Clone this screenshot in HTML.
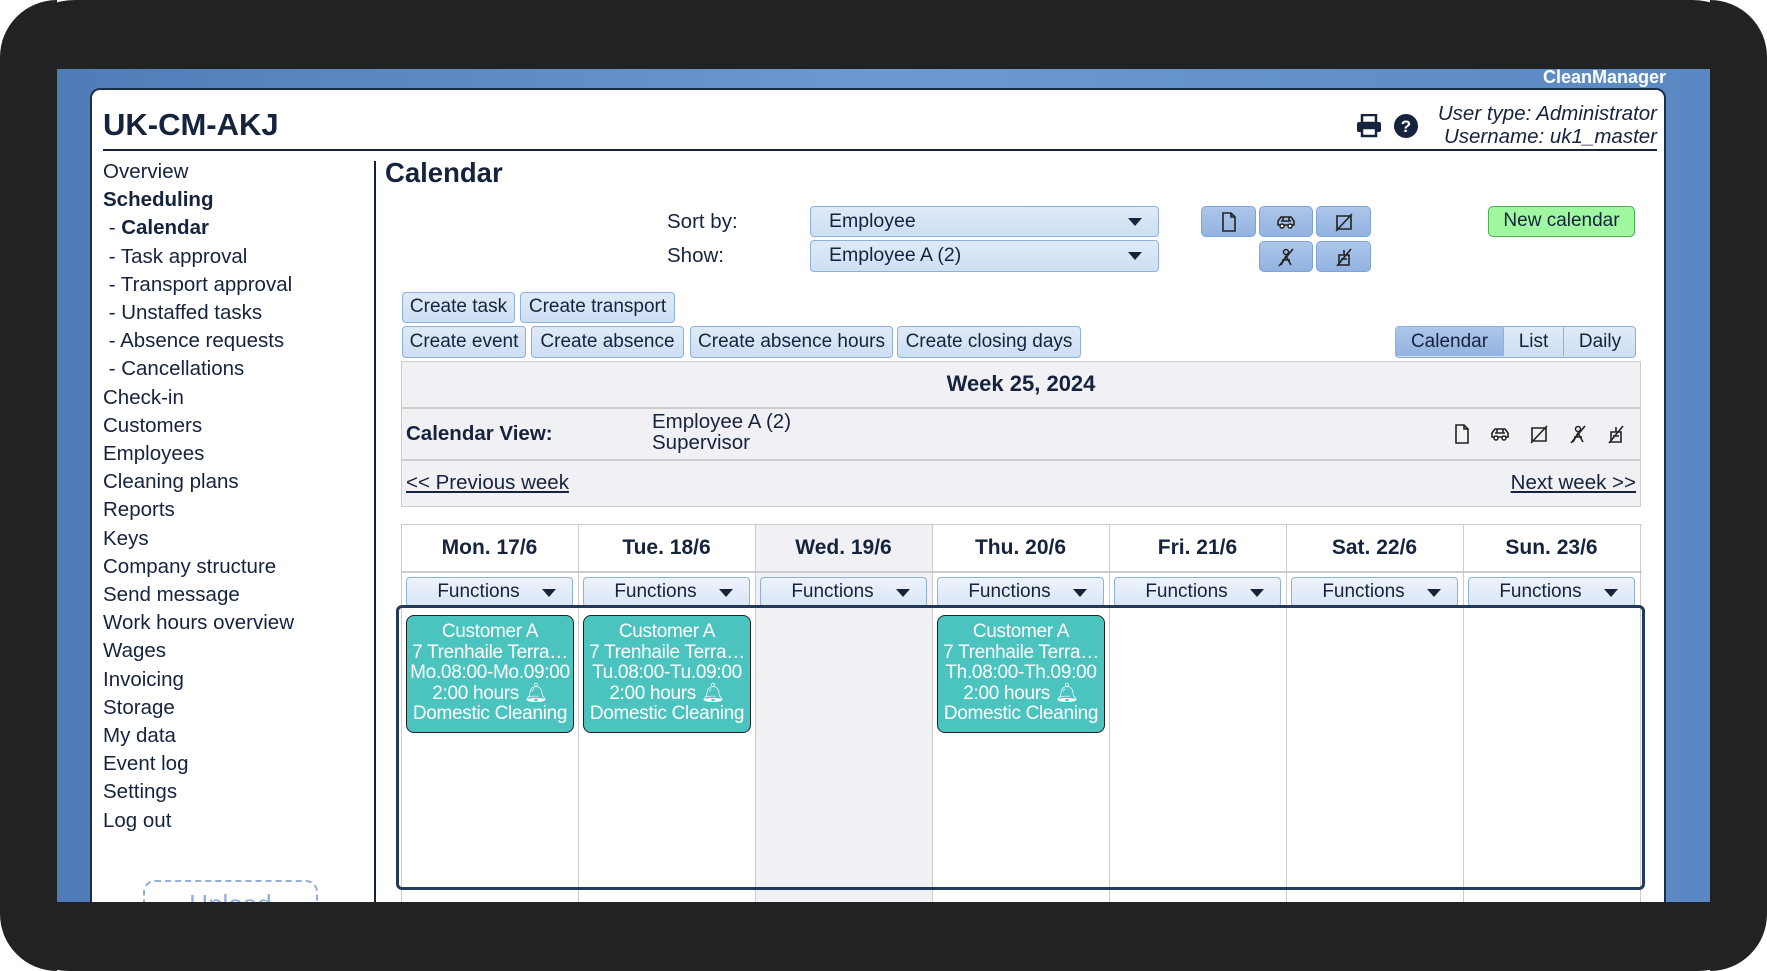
<!DOCTYPE html>
<html><head><meta charset="utf-8">
<style>
*{margin:0;padding:0;box-sizing:border-box}
html,body{width:1767px;height:971px;overflow:hidden}
body{background:#fff;font-family:"Liberation Sans",Arial,sans-serif;color:#16233d;position:relative}
#frame{position:absolute;left:0;top:0;width:1767px;height:971px;background:#222;border-radius:75px}
#blue{position:absolute;left:57px;top:69px;width:1653px;height:833px;background:linear-gradient(90deg,#4f7cb8,#6a9ad0 50%,#5a88c3);overflow:hidden}
#panel{position:absolute;left:33px;top:19px;width:1576px;height:840px;background:#fff;border:2px solid #1c2d48;border-radius:10px 10px 0 0}
.a{position:absolute;white-space:nowrap}
.nav{font-size:20.5px;line-height:28.2px}
.btn{position:absolute;background:linear-gradient(#dfeaf7,#cddff3);border:1.5px solid #8fb0dd;border-radius:4px;font-size:19px;text-align:center;color:#16233d}
.ib{position:absolute;background:linear-gradient(#adc6ea,#93b3e1);border:1.5px solid #7ea3d8;border-radius:5px;display:flex;align-items:center;justify-content:center}
.task{position:absolute;background:#4bc4c0;border:1.5px solid #222;border-radius:8px;color:#fff;font-size:19px;letter-spacing:-0.3px;line-height:20.5px;text-align:center;overflow:hidden;white-space:nowrap;padding-top:6px}
.col{position:absolute;top:0;height:500px;border-left:1.5px solid #ccc}
.dh{position:absolute;font-weight:bold;font-size:21px;text-align:center;width:177px;top:11px}
.fn{position:absolute;top:52px;width:167px;height:30px;background:linear-gradient(#eef3fb,#d9e6f6);border:1.5px solid #8fb0dd;border-radius:4px;font-size:19px;line-height:27px;text-indent:-22px;text-align:center}
.fn:after{content:"";position:absolute;right:16px;top:11px;border-left:7px solid transparent;border-right:7px solid transparent;border-top:8px solid #16233d}
</style></head><body>
<svg width="0" height="0" style="position:absolute">
 <defs>
  <g id="doc"><path d="M4 1h8l4 4v14H4z M12 1v4h4" fill="none" stroke="#222" stroke-width="1.6"/></g>
  <g id="car"><path d="M2 13v-4l3-4h10l3 4v4z M5 9h10 M7 5v4 M13 5v4" fill="none" stroke="#222" stroke-width="1.6"/><circle cx="6" cy="14" r="2" fill="#fff" stroke="#222" stroke-width="1.5"/><circle cx="14" cy="14" r="2" fill="#fff" stroke="#222" stroke-width="1.5"/></g>
  <g id="nosq"><path d="M3 4h14v13H3z M2 19L18 2" fill="none" stroke="#222" stroke-width="1.6"/></g>
  <g id="nop"><circle cx="10" cy="5" r="2.5" fill="none" stroke="#222" stroke-width="1.5"/><path d="M5 18l5-9 5 9 M6 13h8 M3 19L17 2" fill="none" stroke="#222" stroke-width="1.6"/></g>
  <g id="nop2"><path d="M5 8h10v10H5z M10 3v5 M7 12h6 M3 19L17 2" fill="none" stroke="#222" stroke-width="1.6"/></g>
 </defs>
</svg>
<div id="frame"></div>
<div id="blue">
 <div class="a" style="right:44px;top:-2px;color:#fff;font-weight:bold;font-size:18px">CleanManager</div>
 <div id="panel"></div>
</div>
<div class="a" style="left:103px;top:107px;font-size:31px;font-weight:bold">UK-CM-AKJ</div>
<div class="a" style="left:103px;top:149px;width:1554px;height:2px;background:#16233d"></div>
<svg class="a" style="left:1356px;top:114px" width="26" height="24" viewBox="0 0 26 24"><rect x="6" y="1" width="14" height="8" fill="none" stroke="#16233d" stroke-width="2.5"/><rect x="1" y="8" width="24" height="10" rx="2" fill="#16233d"/><rect x="6" y="14" width="14" height="8" fill="#fff" stroke="#16233d" stroke-width="2.5"/></svg>
<svg class="a" style="left:1394px;top:114px" width="24" height="24" viewBox="0 0 24 24"><circle cx="12" cy="12" r="12" fill="#16233d"/><text x="12" y="18" font-family="Liberation Sans" font-weight="bold" font-size="17" fill="#fff" text-anchor="middle">?</text></svg>
<div class="a" style="right:110px;top:102px;font-size:20.5px;font-style:italic;text-align:right;line-height:23px">User type: Administrator<br>Username: uk1_master</div>
<div class="a nav" style="left:103px;top:158px">Overview<br><b>Scheduling</b><br>&nbsp;- <b>Calendar</b><br>&nbsp;- Task approval<br>&nbsp;- Transport approval<br>&nbsp;- Unstaffed tasks<br>&nbsp;- Absence requests<br>&nbsp;- Cancellations<br>Check-in<br>Customers<br>Employees<br>Cleaning plans<br>Reports<br>Keys<br>Company structure<br>Send message<br>Work hours overview<br>Wages<br>Invoicing<br>Storage<br>My data<br>Event log<br>Settings<br>Log out</div>
<div class="a" style="left:143px;top:880px;width:175px;height:40px;border:2px dashed #8fb0dd;border-radius:12px;color:#8fb0dd;font-size:26px;text-align:center;padding-top:7px">Upload</div>
<div class="a" style="left:374px;top:161px;width:2px;height:745px;background:#16233d"></div>
<div class="a" style="left:385px;top:157px;font-size:27.5px;font-weight:bold">Calendar</div>
<div class="a" style="left:667px;top:210px;font-size:20.5px">Sort by:</div>
<div class="a" style="left:667px;top:244px;font-size:20.5px">Show:</div>
<div class="btn" style="left:810px;top:206px;width:349px;height:31px;text-align:left;padding:3px 18px;font-size:19.5px">Employee<span style="position:absolute;right:16px;top:11px;border-left:7px solid transparent;border-right:7px solid transparent;border-top:8px solid #16233d"></span></div>
<div class="btn" style="left:810px;top:240px;width:349px;height:32px;text-align:left;padding:3px 18px;font-size:19.5px">Employee A (2)<span style="position:absolute;right:16px;top:11px;border-left:7px solid transparent;border-right:7px solid transparent;border-top:8px solid #16233d"></span></div>
<div class="ib" style="left:1201px;top:206px;width:55px;height:31px"><svg width="20" height="20"><use href="#doc"/></svg></div>
<div class="ib" style="left:1259px;top:206px;width:54px;height:31px"><svg width="20" height="20"><use href="#car"/></svg></div>
<div class="ib" style="left:1316px;top:206px;width:55px;height:31px"><svg width="20" height="20"><use href="#nosq"/></svg></div>
<div class="ib" style="left:1259px;top:241px;width:54px;height:31px"><svg width="20" height="20"><use href="#nop"/></svg></div>
<div class="ib" style="left:1316px;top:241px;width:55px;height:31px"><svg width="20" height="20"><use href="#nop2"/></svg></div>
<div class="a" style="left:1488px;top:206px;width:147px;height:31px;background:#9ff79f;border:1.5px solid #4caf50;border-radius:5px;font-size:19px;text-align:center;line-height:28px">New calendar</div>
<div class="btn" style="left:402px;top:292px;width:113px;height:31px;line-height:28px">Create task</div>
<div class="btn" style="left:520px;top:292px;width:155px;height:31px;line-height:28px">Create transport</div>
<div class="btn" style="left:402px;top:326px;width:124px;height:32px;line-height:29px">Create event</div>
<div class="btn" style="left:531px;top:326px;width:153px;height:32px;line-height:29px">Create absence</div>
<div class="btn" style="left:690px;top:326px;width:203px;height:32px;line-height:29px">Create absence hours</div>
<div class="btn" style="left:897px;top:326px;width:184px;height:32px;line-height:29px">Create closing days</div>
<div class="btn" style="left:1395px;top:326px;width:241px;height:32px;line-height:29px;padding:0">
 <span style="position:absolute;left:0;top:0;width:108px;height:29px;background:linear-gradient(#adc6ea,#93b3e1);border-right:1.5px solid #8fb0dd">Calendar</span>
 <span style="position:absolute;left:108px;top:0;width:60px;border-right:1.5px solid #8fb0dd">List</span>
 <span style="position:absolute;left:168px;top:0;width:72px">Daily</span></div>
<div class="a" style="left:401px;top:361px;width:1240px;height:146px;background:#f0f0f5;border:1.5px solid #ccc"></div>
<div class="a" style="left:401px;top:407px;width:1240px;height:1.5px;background:#ccc"></div>
<div class="a" style="left:401px;top:459px;width:1240px;height:1.5px;background:#ccc"></div>
<div class="a" style="left:401px;top:371px;width:1240px;text-align:center;font-weight:bold;font-size:22px">Week 25, 2024</div>
<div class="a" style="left:406px;top:422px;font-weight:bold;font-size:20.5px">Calendar View:</div>
<div class="a" style="left:652px;top:411px;font-size:20.5px;line-height:21px">Employee A (2)<br>Supervisor</div>
<svg class="a" style="left:1452px;top:424px" width="20" height="20"><use href="#doc"/></svg>
<svg class="a" style="left:1490px;top:424px" width="20" height="20"><use href="#car"/></svg>
<svg class="a" style="left:1529px;top:424px" width="20" height="20"><use href="#nosq"/></svg>
<svg class="a" style="left:1568px;top:424px" width="20" height="20"><use href="#nop"/></svg>
<svg class="a" style="left:1606px;top:424px" width="20" height="20"><use href="#nop2"/></svg>
<div class="a" style="left:406px;top:471px;font-size:20.5px;text-decoration:underline">&lt;&lt; Previous week</div>
<div class="a" style="right:131px;top:471px;font-size:20.5px;text-decoration:underline">Next week &gt;&gt;</div>
<div class="a" style="left:401px;top:524px;width:1241px;height:378px;border-top:1.5px solid #ccc;overflow:hidden">
 <div class="a" style="left:354px;top:0;width:177px;height:400px;background:#f0f0f5"></div>
 <div class="a" style="left:0;top:46px;width:1241px;height:1.5px;background:#ccc"></div>
 <div class="col" style="left:0"></div><div class="col" style="left:177px"></div><div class="col" style="left:354px"></div><div class="col" style="left:531px"></div><div class="col" style="left:708px"></div><div class="col" style="left:885px"></div><div class="col" style="left:1062px"></div><div class="col" style="left:1239px"></div>
 <div class="dh" style="left:0">Mon. 17/6</div><div class="dh" style="left:177px">Tue. 18/6</div><div class="dh" style="left:354px">Wed. 19/6</div><div class="dh" style="left:531px">Thu. 20/6</div><div class="dh" style="left:708px">Fri. 21/6</div><div class="dh" style="left:885px">Sat. 22/6</div><div class="dh" style="left:1062px">Sun. 23/6</div>
 <div class="fn" style="left:5px">Functions</div><div class="fn" style="left:182px">Functions</div><div class="fn" style="left:359px">Functions</div><div class="fn" style="left:536px">Functions</div><div class="fn" style="left:713px">Functions</div><div class="fn" style="left:890px">Functions</div><div class="fn" style="left:1067px">Functions</div>
</div>
<div class="a" style="left:396px;top:605px;width:1249px;height:285px;border:3.5px solid #233a5c;border-radius:6px"></div>
<div class="task" style="left:406px;top:615px;width:168px;height:118px">Customer A<br>7 Trenhaile Terra…<br>Mo.08:00-Mo.09:00<br>2:00 hours 🔔︎<br>Domestic Cleaning</div>
<div class="task" style="left:583px;top:615px;width:168px;height:118px">Customer A<br>7 Trenhaile Terra…<br>Tu.08:00-Tu.09:00<br>2:00 hours 🔔︎<br>Domestic Cleaning</div>
<div class="task" style="left:937px;top:615px;width:168px;height:118px">Customer A<br>7 Trenhaile Terra…<br>Th.08:00-Th.09:00<br>2:00 hours 🔔︎<br>Domestic Cleaning</div>
<div class="a" style="left:0;top:902px;width:1767px;height:69px;background:#222;border-radius:0 0 75px 75px"></div>
<div class="a" style="left:0;top:0;width:57px;height:971px;background:#222;border-radius:75px 0 0 75px"></div>
<div class="a" style="left:1710px;top:0;width:57px;height:971px;background:#222;border-radius:0 75px 75px 0"></div>
</body></html>
